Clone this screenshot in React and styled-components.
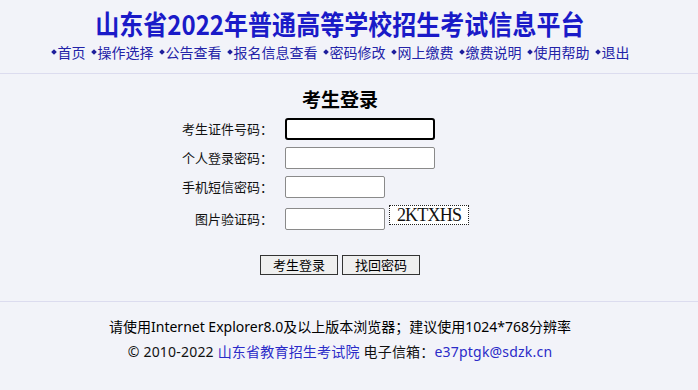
import styled, { createGlobalStyle } from "styled-components";

const GlobalStyle = createGlobalStyle`
	html, body {
		margin: 0;
		background: #f2f3f9;
	}
	body {
		font-family: "Noto Sans", "Noto Sans CJK SC", sans-serif;
		color: #000;
	}
`;

const navItems = [
	"首页",
	"操作选择",
	"公告查看",
	"报名信息查看",
	"密码修改",
	"网上缴费",
	"缴费说明",
	"使用帮助",
	"退出",
];

const fields = [
	{ label: "考生证件号码：", width: 150, focused: true },
	{ label: "个人登录密码：", width: 150 },
	{ label: "手机短信密码：", width: 100 },
	{ label: "图片验证码：", width: 100, captcha: "2KTXHS" },
];

const App = () => {
	return (
		<>
			<GlobalStyle />
			<Header>
				<Inner>
					<Title>山东省2022年普通高等学校招生考试信息平台</Title>
					<Nav>
						{navItems.map((item) => (
							<NavLink key={item} href="#">
								<Bullet />
								{item}
							</NavLink>
						))}
					</Nav>
				</Inner>
			</Header>

			<Main>
				<Inner>
					<Heading>考生登录</Heading>
					<Form>
						{fields.map((f) => (
							<Row key={f.label} tall={!!f.captcha}>
								<Label>{f.label}</Label>
								<Field>
									<Input
										type={f.label.includes("密码") ? "password" : "text"}
										focused={f.focused}
										style={{ width: f.width }}
									/>
									{f.captcha && <Captcha>{f.captcha}</Captcha>}
								</Field>
							</Row>
						))}
					</Form>
					<Buttons>
						<Button>考生登录</Button>
						<Button>找回密码</Button>
					</Buttons>
				</Inner>
			</Main>

			<Footer>
				<Inner>
					<Note>请使用Internet Explorer8.0及以上版本浏览器；建议使用1024*768分辨率</Note>
					<Copy>
						© 2010-2022 <FootLink href="#">山东省教育招生考试院</FootLink> 电子信箱：
						<FootLink href="#">e37ptgk@sdzk.cn</FootLink>
					</Copy>
				</Inner>
			</Footer>
		</>
	);
};

const Header = styled.header`
	height: 73px;
	border-bottom: 1px solid #dcdcef;
`;

const Inner = styled.div`
	width: 680px;
	display: flex;
	flex-direction: column;
	align-items: center;
`;

const Title = styled.h1`
	margin: 8px 0 0;
	font-family: "Noto Sans CJK SC", sans-serif;
	font-size: 27px;
	line-height: 32px;
	font-weight: 700;
	color: #1a1ac8;
	white-space: nowrap;
	transform: scaleX(0.89);
`;

const Nav = styled.nav`
	display: flex;
	gap: 5px;
	margin-top: 2px;
`;

const NavLink = styled.a`
	display: flex;
	align-items: center;
	font-family: "Noto Sans CJK SC", sans-serif;
	font-size: 14px;
	line-height: 20px;
	color: #2323a8;
	text-decoration: none;
	white-space: nowrap;
`;

const Bullet = styled.span`
	flex: none;
	width: 4px;
	height: 4px;
	margin: 0 2px 0 1px;
	background: #1e1e9c;
	transform: rotate(45deg);
`;

const Main = styled.main`
	height: 227px;
	border-bottom: 1px solid #dcdcef;
`;

const Heading = styled.h2`
	margin: 12px 0 0;
	font-family: "Noto Sans CJK SC", sans-serif;
	font-size: 19px;
	line-height: 26px;
	font-weight: 700;
`;

const Form = styled.div`
	display: flex;
	flex-direction: column;
	margin-top: 2px;
	width: 680px;
`;

const Row = styled.div`
	display: grid;
	grid-template-columns: 273px 1fr;
	column-gap: 12px;
	align-items: center;
	height: ${(p) => (p.tall ? "35px" : "29px")};
`;

const Label = styled.span`
	text-align: right;
	font-family: "Noto Sans CJK SC", sans-serif;
	font-size: 13px;
	color: #111;
`;

const Field = styled.div`
	display: flex;
	align-items: flex-end;
	gap: 4px;
`;

const Input = styled.input`
	box-sizing: border-box;
	height: 22px;
	margin: 0;
	padding: 1px 3px;
	background: #fff;
	border: ${(p) => (p.focused ? "2px solid #000" : "1px solid #8a8a8a")};
	border-radius: ${(p) => (p.focused ? "3px" : "2px")};
	outline: none;
`;

const Captcha = styled.span`
	box-sizing: border-box;
	align-self: flex-start;
	margin-top: -3px;
	width: 80px;
	height: 20px;
	display: flex;
	align-items: center;
	justify-content: center;
	background: #fff;
	border: 1px dotted #222;
	font-family: "Liberation Serif", serif;
	font-size: 18px;
	line-height: 18px;
	letter-spacing: -0.8px;
	color: #111;
`;

const Buttons = styled.div`
	display: flex;
	gap: 4px;
	margin-top: 19px;
`;

const Button = styled.button`
	width: 78px;
	height: 20px;
	padding: 0;
	font-family: "Noto Sans CJK SC", sans-serif;
	font-size: 13px;
	line-height: 18px;
	color: #000;
	background: #efefef;
	border: 1px solid #333;
`;

const Footer = styled.footer`
	padding-top: 14px;
`;

const Note = styled.p`
	margin: 0;
	font-size: 14px;
	line-height: 22px;
	white-space: nowrap;
`;

const Copy = styled.p`
	margin: 3px 0 0;
	font-size: 14px;
	line-height: 22px;
	color: #111;
	letter-spacing: 0.2px;
	white-space: nowrap;
`;

const FootLink = styled.a`
	color: #2b2bc8;
	text-decoration: none;
`;

export default App;
